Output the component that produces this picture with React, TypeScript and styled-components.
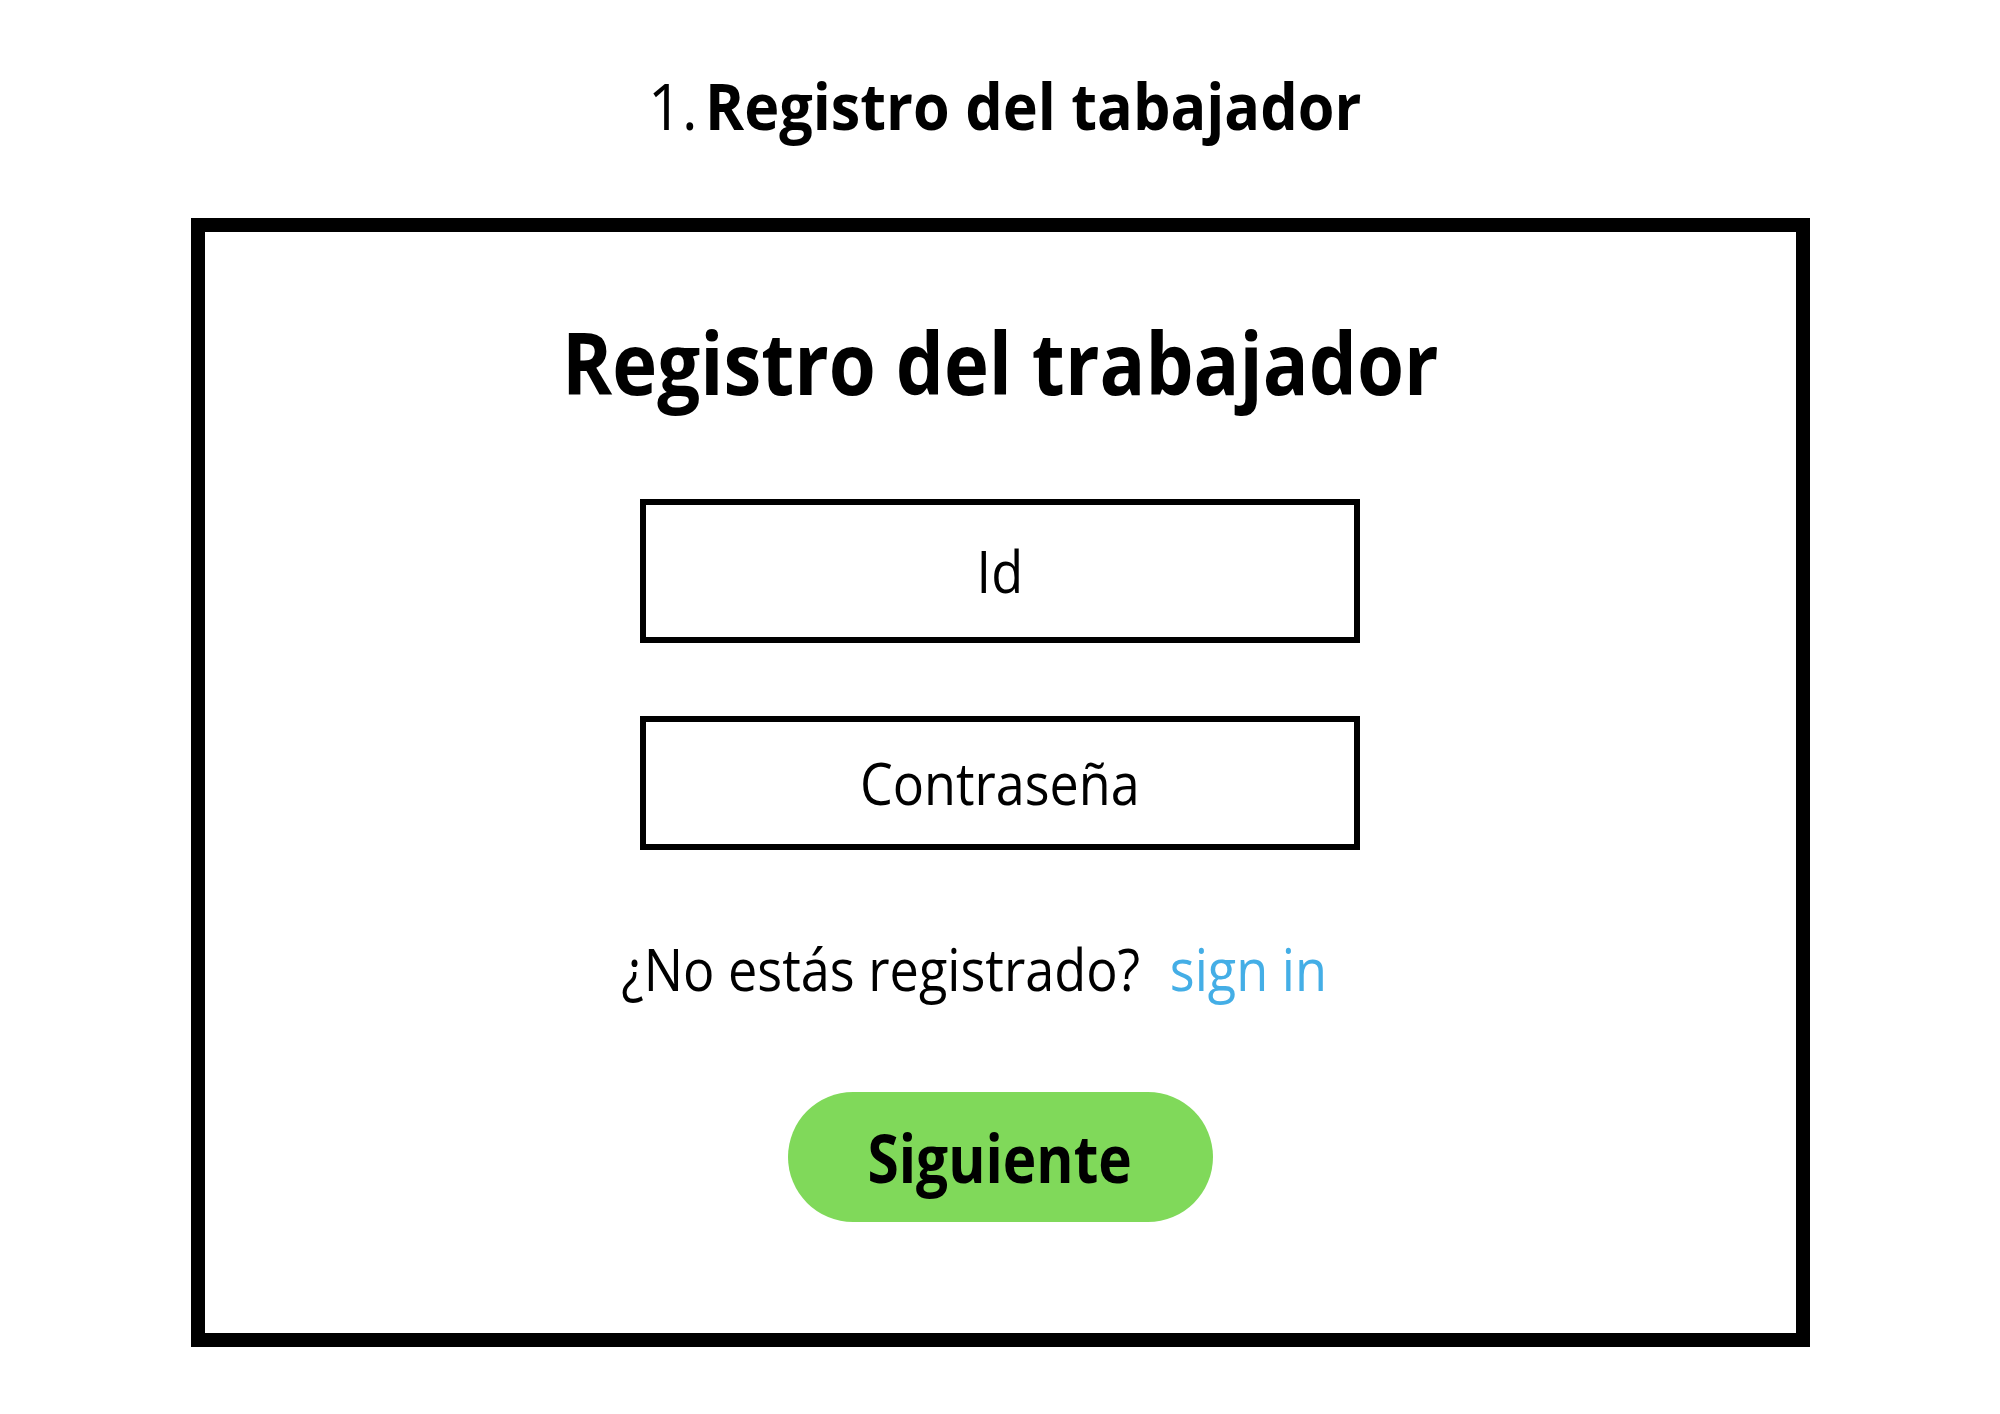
import React from 'react';
import styled, { createGlobalStyle } from 'styled-components';

const GlobalStyle = createGlobalStyle`
  html, body {
    margin: 0;
    padding: 0;
    background: #ffffff;
  }
  body {
    font-family: 'Open Sans', 'Noto Sans', sans-serif;
    color: #000000;
  }
`;

// the mockup's lettering is a little narrower than Open Sans
const Narrow = styled.span<{ $x: number }>`
  display: inline-block;
  transform: scaleX(${(p) => p.$x});
  transform-origin: center;
  white-space: nowrap;
`;

const Page = styled.div`
  width: 2000px;
  height: 1414px;
  display: flex;
  flex-direction: column;
  align-items: center;
  padding-top: 74px;
  box-sizing: border-box;
`;

const StepTitle = styled.h1`
  margin: 0 0 80px 10px;
  font-size: 64px;
  line-height: 1;
  font-weight: 400;

  strong {
    font-weight: 700;
    margin-left: 8px;
  }
`;

const Frame = styled.section`
  width: 1619px;
  box-sizing: border-box;
  border: 14px solid #000000;
  display: flex;
  flex-direction: column;
  align-items: center;
  padding: 87px 0 111px;
`;

const Heading = styled.h2`
  margin: 0 0 94px;
  font-size: 86px;
  line-height: 1;
  font-weight: 700;
`;

const Field = styled.div<{ $height: number; $gap: number }>`
  width: 720px;
  height: ${(p) => p.$height}px;
  box-sizing: border-box;
  border: 6px solid #000000;
  display: flex;
  align-items: center;
  justify-content: center;
  font-size: 58px;
  line-height: 1;
  margin-bottom: ${(p) => p.$gap}px;
`;

const Prompt = styled.p`
  margin: 0 0 94px;
  padding-right: 52px;
  font-size: 58px;
  line-height: 1;
`;

const SignIn = styled.a`
  color: #44aee6;
  text-decoration: none;
  margin-left: 33px;
`;

const NextButton = styled.button`
  width: 425px;
  height: 130px;
  border: none;
  border-radius: 65px;
  background: #80d95a;
  font-family: 'Open Sans', 'Noto Sans', sans-serif;
  font-size: 66px;
  font-weight: 700;
  line-height: 1;
  color: #000000;
  padding: 0;
`;

const App: React.FC = () => (
  <>
    <GlobalStyle />
    <Page>
      <StepTitle>
        <Narrow $x={0.927}>
          1.<strong>Registro del tabajador</strong>
        </Narrow>
      </StepTitle>
      <Frame>
        <Heading>
          <Narrow $x={0.885}>Registro del trabajador</Narrow>
        </Heading>
        <Field $height={144} $gap={73}>
          <Narrow $x={0.9}>Id</Narrow>
        </Field>
        <Field $height={134} $gap={90}>
          <Narrow $x={0.897}>Contraseña</Narrow>
        </Field>
        <Prompt>
          <Narrow $x={0.9}>
            ¿No estás registrado?
            <SignIn href="#">sign in</SignIn>
          </Narrow>
        </Prompt>
        <NextButton>
          <Narrow $x={0.86}>Siguiente</Narrow>
        </NextButton>
      </Frame>
    </Page>
  </>
);

export default App;
